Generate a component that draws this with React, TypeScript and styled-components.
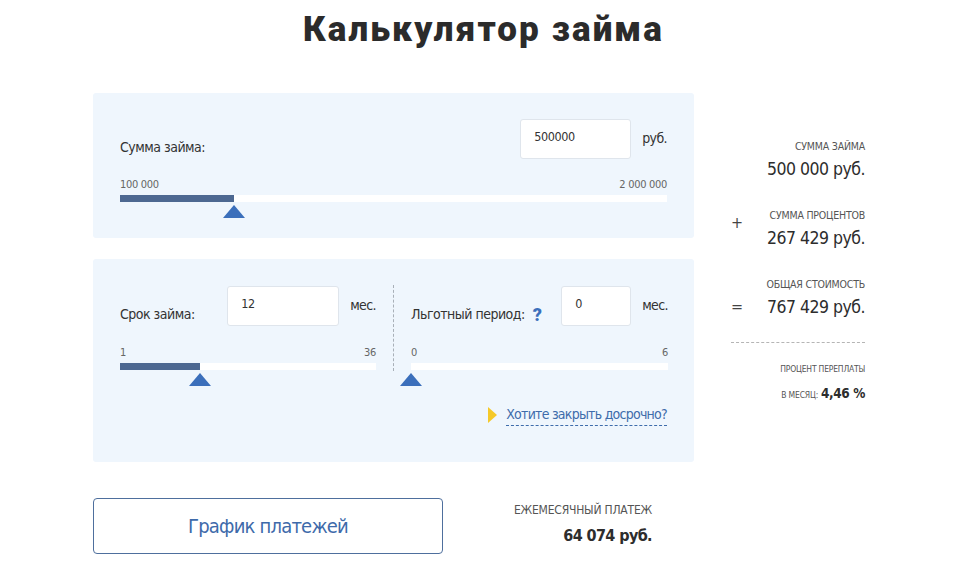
import React from "react";
import styled, { createGlobalStyle } from "styled-components";

const narrow = `"DejaVu Sans Condensed", "DejaVu Sans", sans-serif`;

const GlobalStyle = createGlobalStyle`
  html, body { margin: 0; padding: 0; background: #fff; }
  body { font-family: ${narrow}; color: #333; }
  * { box-sizing: border-box; }
`;

const Page = styled.div`
  width: 963px;
  height: 565px;
  overflow: hidden;
`;

const Title = styled.h1`
  margin: 0;
  padding: 9px 0 0 4px;
  height: 93px;
  text-align: center;
  font-family: "Roboto", "Inter", sans-serif;
  font-weight: 900;
  font-size: 35px;
  line-height: 42px;
  color: #2b2b2b;
  letter-spacing: 2.1px;
`;

const Layout = styled.div`
  margin-left: 93px;
  display: grid;
  grid-template-columns: 601px 171px;
`;

const Calc = styled.div`
  display: flex;
  flex-direction: column;
`;

const Panel = styled.section<{ $pb: number; $pt: number }>`
  background: #eff6fd;
  border-radius: 3px;
  padding: ${(p) => p.$pt}px 27px ${(p) => p.$pb}px 27px;
  & + & {
    margin-top: 21px;
  }
`;

const FieldRow = styled.div`
  display: flex;
  align-items: flex-start;
  height: 40px;
`;

const Label = styled.span`
  flex: 1;
  display: flex;
  align-items: center;
  margin-top: 18px;
  height: 20px;
  font-size: 14px;
  letter-spacing: -0.5px;
  color: #333;
  white-space: nowrap;
`;

const Help = styled.span`
  margin-left: 8px;
  font-family: "Roboto", sans-serif;
  font-weight: 900;
  font-size: 18px;
  letter-spacing: 0;
  color: #3b6fbb;
`;

const Input = styled.input<{ $w: number }>`
  width: ${(p) => p.$w}px;
  height: 40px;
  padding: 0 0 6px 13px;
  border: 1px solid #dfe5ec;
  border-radius: 3px;
  background: #fff;
  font-family: ${narrow};
  font-size: 12.5px;
  letter-spacing: -0.4px;
  color: #333;
  outline: none;
`;

const Unit = styled.span`
  margin-left: 11px;
  margin-top: 9px;
  font-size: 14px;
  line-height: 20px;
  letter-spacing: -0.6px;
  color: #333;
`;

const Slider = styled.div<{ $gap: number }>`
  margin-top: ${(p) => p.$gap}px;
  padding-bottom: 20px;
`;

const Scale = styled.div`
  display: flex;
  justify-content: space-between;
  font-size: 11px;
  line-height: 14px;
  letter-spacing: -0.3px;
  color: #666;
  margin-bottom: 3px;
`;

const Track = styled.div`
  position: relative;
  height: 7px;
  background: #fff;
`;

const Fill = styled.div`
  height: 100%;
  background: #4d6891;
`;

/* triangular handle sitting just under the track */
const Thumb = styled.div`
  position: absolute;
  top: 10px;
  width: 0;
  height: 0;
  margin-left: -11px;
  border-left: 11px solid transparent;
  border-right: 11px solid transparent;
  border-bottom: 13px solid #3b6fbb;
`;

const Columns = styled.div`
  display: grid;
  grid-template-columns: 256px 1px 257px;
  column-gap: 17px;
  align-items: start;
`;

const Divider = styled.div`
  height: 86px;
  margin-top: -1px;
  border-left: 1px dashed #a9b0b8;
`;

const Column = styled.div`
  display: flex;
  flex-direction: column;
`;

const LinkRow = styled.div`
  margin-top: 14px;
  display: flex;
  justify-content: flex-end;
  align-items: center;
  gap: 9px;
`;

const Arrow = styled.span`
  width: 0;
  height: 0;
  border-top: 8px solid transparent;
  border-bottom: 8px solid transparent;
  border-left: 9px solid #f5c929;
`;

const DashedLink = styled.a`
  font-size: 14px;
  line-height: 21px;
  letter-spacing: -0.75px;
  color: #3e6cab;
  text-decoration: none;
  border-bottom: 1px dashed #3e6cab;
  cursor: pointer;
`;

const Footer = styled.div`
  margin-top: 36px;
  display: flex;
  justify-content: space-between;
  align-items: flex-start;
  padding-right: 42px;
`;

const ScheduleButton = styled.button`
  width: 350px;
  height: 56px;
  background: #fff;
  border: 1px solid #4e6f9d;
  border-radius: 4px;
  font-family: ${narrow};
  font-size: 20px;
  letter-spacing: -0.8px;
  color: #3e6aaa;
  cursor: pointer;
`;

const Payment = styled.div`
  margin-top: 5px;
  text-align: right;
`;

const Caption = styled.div<{ $size: number }>`
  font-size: ${(p) => p.$size}px;
  line-height: 14px;
  letter-spacing: -0.2px;
  color: #555;
  text-transform: uppercase;
  white-space: nowrap;
`;

const Amount = styled.div<{ $bold?: boolean }>`
  margin-top: ${(p) => (p.$bold ? 7 : 4)}px;
  font-size: ${(p) => (p.$bold ? 16 : 17.5)}px;
  line-height: 24px;
  letter-spacing: ${(p) => (p.$bold ? -0.6 : -0.5)}px;
  font-weight: ${(p) => (p.$bold ? 700 : 400)};
  color: #2d2d2d;
  white-space: nowrap;
`;

const Summary = styled.aside`
  padding: 46px 0 0 37px;
  display: flex;
  flex-direction: column;
  gap: 27px;
`;

const SumGroup = styled.div`
  display: grid;
  grid-template-columns: 14px 1fr;
  text-align: right;
`;

const Sign = styled.span<{ $at: "middle" | "end" }>`
  grid-column: 1;
  grid-row: 1;
  align-self: ${(p) => (p.$at === "end" ? "end" : "center")};
  text-align: left;
  font-size: 16px;
  line-height: 24px;
  color: #444;
  margin-top: ${(p) => (p.$at === "middle" ? "-12px" : "0")};
`;

const GroupBody = styled.div`
  grid-column: 2;
  grid-row: 1;
`;

const Rule = styled.div`
  margin-top: -4px;
  border-top: 1px dashed #b5b5b5;
`;

const Overpay = styled.div`
  margin-top: -8px;
  text-align: right;
  display: flex;
  flex-direction: column;
  gap: 7px;
`;

const PerMonth = styled.div`
  display: flex;
  justify-content: flex-end;
  align-items: baseline;
  gap: 3px;
  line-height: 20px;
`;

const Percent = styled.span`
  font-size: 13.5px;
  font-weight: 700;
  letter-spacing: -0.4px;
  color: #2d2d2d;
`;

type SliderProps = { min: string; max: string; pos: number; gap: number; filled?: boolean };

function RangeBar({ min, max, pos, gap, filled = true }: SliderProps) {
  return (
    <Slider $gap={gap}>
      <Scale>
        <span>{min}</span>
        <span>{max}</span>
      </Scale>
      <Track>
        {filled && <Fill style={{ width: `${pos * 100}%` }} />}
        <Thumb style={{ left: `${pos * 100}%` }} />
      </Track>
    </Slider>
  );
}

type SumProps = { caption: string; value: string; sign?: string; at?: "middle" | "end" };

function SumLine({ caption, value, sign, at = "middle" }: SumProps) {
  return (
    <SumGroup>
      {sign && <Sign $at={at}>{sign}</Sign>}
      <GroupBody>
        <Caption $size={10.5}>{caption}</Caption>
        <Amount>{value}</Amount>
      </GroupBody>
    </SumGroup>
  );
}

export default function App() {
  return (
    <Page>
      <GlobalStyle />
      <Title>Калькулятор займа</Title>
      <Layout>
        <Calc>
          <Panel $pt={26} $pb={16}>
            <FieldRow>
              <Label>Сумма займа:</Label>
              <Input $w={111} defaultValue="500000" />
              <Unit>руб.</Unit>
            </FieldRow>
            <RangeBar min="100 000" max="2 000 000" pos={0.209} gap={19} />
          </Panel>
          <Panel $pt={27} $pb={36}>
            <Columns>
              <Column>
                <FieldRow>
                  <Label>Срок займа:</Label>
                  <Input $w={112} defaultValue="12" />
                  <Unit>мес.</Unit>
                </FieldRow>
                <RangeBar min="1" max="36" pos={0.314} gap={20} />
              </Column>
              <Divider />
              <Column>
                <FieldRow>
                  <Label>
                    Льготный период:<Help>?</Help>
                  </Label>
                  <Input $w={70} defaultValue="0" />
                  <Unit>мес.</Unit>
                </FieldRow>
                <RangeBar min="0" max="6" pos={0} gap={20} filled={false} />
              </Column>
            </Columns>
            <LinkRow>
              <Arrow />
              <DashedLink>Хотите закрыть досрочно?</DashedLink>
            </LinkRow>
          </Panel>
          <Footer>
            <ScheduleButton>График платежей</ScheduleButton>
            <Payment>
              <Caption $size={12}>Ежемесячный платеж</Caption>
              <Amount $bold>64 074 руб.</Amount>
            </Payment>
          </Footer>
        </Calc>
        <Summary>
          <SumLine caption="Сумма займа" value="500 000 руб." />
          <SumLine caption="Сумма процентов" value="267 429 руб." sign="+" />
          <SumLine caption="Общая стоимость" value="767 429 руб." sign="=" at="end" />
          <Rule />
          <Overpay>
            <Caption $size={8.5}>Процент переплаты</Caption>
            <PerMonth>
              <Caption $size={8.5}>В месяц:</Caption>
              <Percent>4,46 %</Percent>
            </PerMonth>
          </Overpay>
        </Summary>
      </Layout>
    </Page>
  );
}
